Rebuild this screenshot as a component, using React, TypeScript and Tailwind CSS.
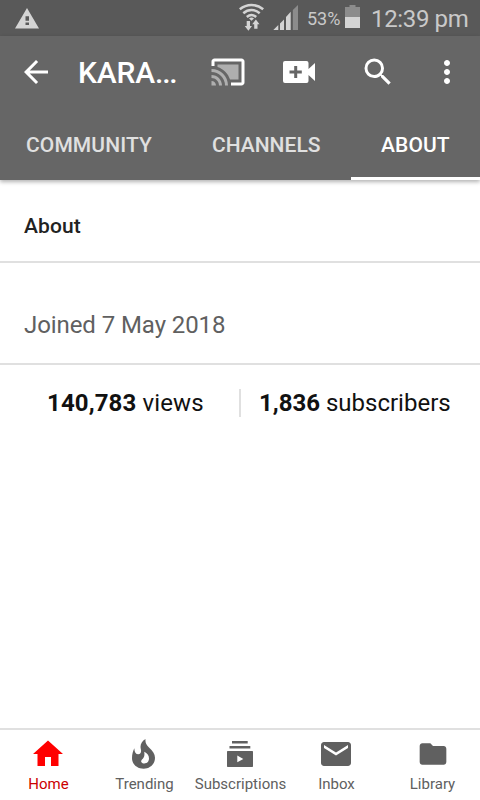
import clsx from 'clsx'
import { ReactNode } from 'react'
import { MdArrowBack, MdEmail, MdFolder, MdHome, MdMoreVert, MdSearch } from 'react-icons/md'

const StatusBar = () => (
  <div className="flex h-9 items-center bg-[#595959] text-[#c9c9c9]">
    <svg className="ml-[15px] h-[21px] w-6 shrink-0" viewBox="0 0 24 21" fill="#d4d4d4">
      <path
        fillRule="evenodd"
        d="M12 0l12 20.5H0zM10.500 8.300v4.500H14V8.300zM10.500 14.500V17H14v-2.500z"
      />
    </svg>
    <svg className="ml-[200px] h-9 w-[26px] shrink-0" viewBox="239 0 26 36" fill="none">
      <g stroke="#d4d4d4" strokeWidth="2.5">
        <path d="M239.8 9.300c7-5.800 16.500-5.800 23.400 0" />
        <path d="M243.300 13.200c5-4.200 11.500-4.200 16.400 0" />
        <path d="M246.800 17c3-2.500 6.500-2.500 9.400 0" />
      </g>
      <path
        fill="#d4d4d4"
        d="M249 18.500a4 4 0 0 1 5 0l-2.500 2.300zM246.700 21h3.300v5h2l-3.600 4.800-3.700-4.800h2zM254.200 28.800h3.300v-4.600h2L255.900 19.400l-3.700 4.800h2z"
      />
    </svg>
    <svg className="ml-2 h-9 w-[26px] shrink-0" viewBox="273 0 26 36">
      <path fill="#d4d4d4" d="M273.300 30l5-5V30zM280 23.500l4-4V30h-4zM286 17l4.700-5.200V30H286z" />
      <path fill="#8c8c8c" d="M292.800 10l5.200-5v25h-5.200z" />
    </svg>
    <span className="ml-[8px] w-[38px] whitespace-nowrap text-[18px]">53%</span>
    <svg className="h-9 w-4 shrink-0" viewBox="345 0 16 36">
      <path fill="#8c8c8c" d="M345 7h4.500V5h6v2h4.500v10h-15z" />
      <path fill="#d4d4d4" d="M345 17h15v11h-15z" />
    </svg>
    <span className="ml-[10px] whitespace-nowrap pt-0.5 text-[24px] tracking-[-0.35px]">12:39 pm</span>
  </div>
)

const CastIcon = () => (
  <svg className="size-9" viewBox="0 0 24 24">
    <path
      fill="#afafaf"
      d="M1 18v3h3c0-1.66-1.34-3-3-3zm0-4v2c2.760 0 5 2.240 5 5h2c0-3.870-3.130-7-7-7zm18-7H5v1.630c3.960 1.280 7.090 4.410 8.370 8.370H19V7zM1 10v2a9 9 0 0 1 9 9h2c0-6.080-4.930-11-11-11z"
    />
    <path
      fill="#fff"
      d="M21 3H3c-1.100 0-2 .9-2 2v3h2V5h18v14h-7v2h7c1.100 0 2-.9 2-2V5c0-1.100-.9-2-2-2z"
    />
  </svg>
)

const AddVideoIcon = () => (
  <svg className="h-[22px] w-8" viewBox="0 0 32 22" fill="#fff">
    <path
      fillRule="evenodd"
      d="M2 0h21.500a2 2 0 0 1 2 2v6L32 2v18l-6.500-6v6a2 2 0 0 1-2 2H2a2 2 0 0 1-2-2V2a2 2 0 0 1 2-2zM11.200 5v4.500H6.500v3h4.700V17h3v-4.500h4.600v-3h-4.600V5z"
    />
  </svg>
)

const Toolbar = () => (
  <div className="flex h-[72px] items-center text-white">
    <MdArrowBack className="ml-[18px] size-9" />
    <h1 className="ml-6 w-[132px] whitespace-nowrap text-[30px] font-medium tracking-[-0.15px]">
      KARA<span className="tracking-[-1.2px]">...</span>
    </h1>
    <CastIcon />
    <div className="ml-[37px]">
      <AddVideoIcon />
    </div>
    <MdSearch className="ml-[45px] size-9" />
    <MdMoreVert className="ml-[33px] size-9" />
  </div>
)

const Tabs = () => (
  <div className="flex h-[72px] text-[21px] font-medium text-[#e0e0e0]">
    <div className="w-[182px] pl-[26px] pt-[22px] tracking-[0.1px]">COMMUNITY</div>
    <div className="w-[169px] pl-[30px] pt-[22px]">CHANNELS</div>
    <div className="w-[129px] border-b-[3px] border-white pl-[30px] pt-[22px] tracking-[0.1px] text-white">
      ABOUT
    </div>
  </div>
)

const FlameIcon = () => (
  <svg className="h-[30px] w-6" viewBox="0 0 24 30" fill="#606060">
    <path
      fillRule="evenodd"
      d="M13.500 0c-.4 3.300.7 5.700 3.500 8.500 3.700 3.600 6 6.300 6 10.200C23 25 18 29.700 11.700 29.700 5 29.700 0 25.200 0 19c0-3.800 1-7 2.300-9.800.2 4 1.500 6 4 6 2.400 0 3.300-2.200 2.500-5.200C7.800 6 9.500 2.300 13.500 0zM12.200 12.700c.7 4-.2 6-2.200 7.800-1.300 1.300-1.200 3 .7 3.700 3.300 1 6.300-1.200 6.300-4.800 0-3-1.700-5.200-4.800-6.700z"
    />
  </svg>
)

const SubscriptionsIcon = () => (
  <svg className="h-[26px] w-[26px]" viewBox="0 0 26 26" fill="#606060">
    <path d="M5 0h15.700v2.500H5zM2.500 5h20.800v2.500H2.500z" />
    <path
      fillRule="evenodd"
      d="M.7 10h24.600a.7.7 0 0 1 .7.7v14.600a.7.7 0 0 1-.7.7H.7a.7.7 0 0 1-.7-.7V10.700a.7.7 0 0 1 .7-.7zM10.300 14.500v6.700l6-3.300z"
    />
  </svg>
)

const navItems: { label: string; icon: ReactNode; active?: boolean }[] = [
  { label: 'Home', icon: <MdHome className="size-9 text-[#ff0000]" />, active: true },
  { label: 'Trending', icon: <FlameIcon /> },
  { label: 'Subscriptions', icon: <SubscriptionsIcon /> },
  { label: 'Inbox', icon: <MdEmail className="size-9" /> },
  { label: 'Library', icon: <MdFolder className="ml-px size-8" /> },
]

const BottomNav = () => (
  <nav className="grid h-[72px] grid-cols-5 border-t-2 border-[#e0e0e0]">
    {navItems.map(({ label, icon, active }) => (
      <div
        key={label}
        className={clsx(
          'flex flex-col items-center pt-1.5 text-[15px] leading-[18px]',
          active ? 'text-[#cc0000]' : 'text-[#606060]'
        )}
      >
        <div className="flex h-9 items-center">{icon}</div>
        <span className="mt-[3px] whitespace-nowrap pl-px">{label}</span>
      </div>
    ))}
  </nav>
)

export default function App() {
  return (
    <div className="flex h-[800px] w-[480px] flex-col overflow-hidden bg-white font-['Roboto',sans-serif] text-[#111]">
      <StatusBar />
      <header className="bg-[#666] shadow-[0_2px_4px_rgba(0,0,0,0.3)]">
        <Toolbar />
        <Tabs />
      </header>
      <main className="flex-1">
        <h2 className="flex h-[83px] items-center border-b-2 border-[#e0e0e0] px-6 pt-[12px] text-[21px] font-medium tracking-[0.1px] text-[#222]">
          About
        </h2>
        <p className="h-[102px] border-b-2 border-[#e0e0e0] px-6 pt-[46px] text-2xl tracking-[-0.08px] text-[#606060]">
          Joined 7 May 2018
        </p>
        <div className="flex h-[76px] items-center text-2xl">
          <div className="w-[239px] pl-[47px] tracking-[0.12px]">
            <b>140,783</b> views
          </div>
          <div className="h-7 w-0.5 bg-[#e0e0e0]" />
          <div className="pl-[18px]">
            <b>1,836</b> subscribers
          </div>
        </div>
      </main>
      <BottomNav />
    </div>
  )
}
